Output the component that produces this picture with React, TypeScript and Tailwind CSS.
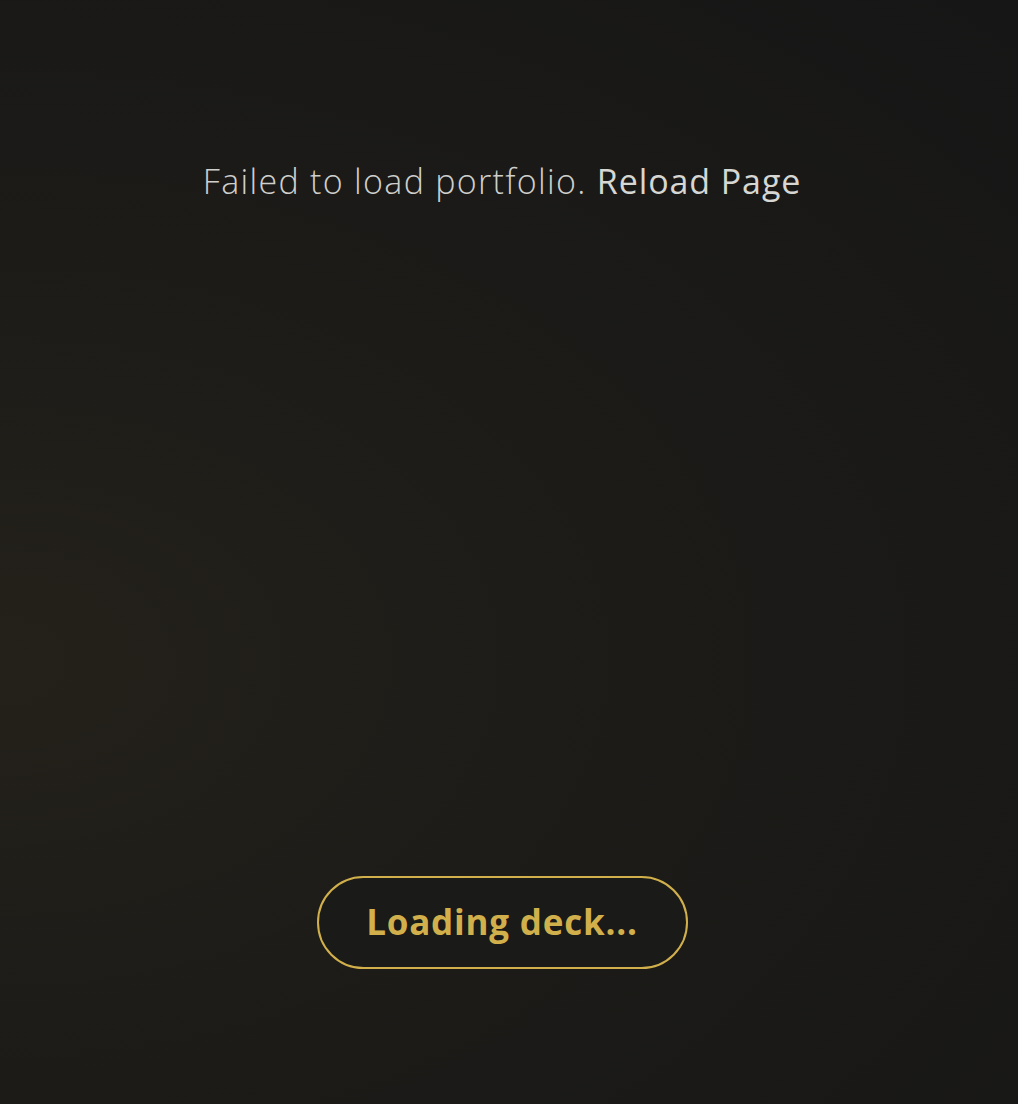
export default function App() {
  return (
    <div className="min-h-[1104px] w-full bg-[radial-gradient(ellipse_at_0%_60%,#24211a_0%,#1c1b18_45%,#161616_100%)] font-['Open_Sans',sans-serif] flex flex-col items-center pr-[14px]">
      {/* Error message */}
      <p className="mt-[158px] text-[34px] leading-[46px] text-[#cfcfcc] font-light tracking-[1.3px]">
        Failed to load portfolio.{' '}
        <button className="font-normal text-[#d6d6d3] tracking-[0.9px]">Reload Page</button>
      </p>

      {/* Deck loader */}
      <div className="mt-[672px] w-[371px] h-[93px] rounded-full border-2 border-[#d1b04c] bg-[#1a1a19] flex items-center justify-center">
        <span className="text-[35px] font-bold text-[#d1b04c] tracking-[0.8px]">Loading deck...</span>
      </div>
    </div>
  );
}
